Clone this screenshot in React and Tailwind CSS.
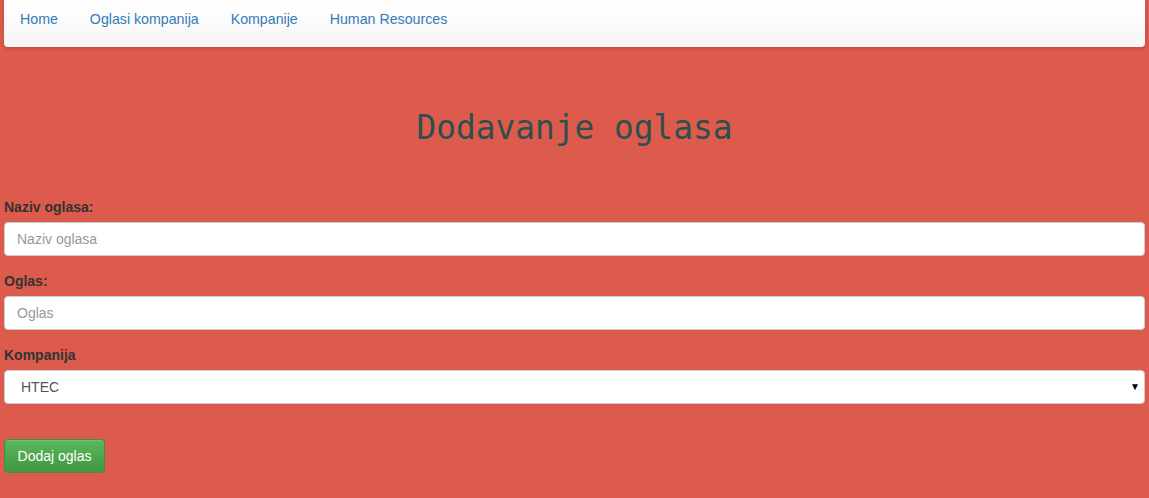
import { useState } from "react";

const links = ["Home", "Oglasi kompanija", "Kompanije", "Human Resources"];

export default function App() {
  const [firma, setFirma] = useState("HTEC");

  return (
    <div className="min-h-[498px] bg-[#dc5b4c] px-[4px] font-['Liberation_Sans',Arial,sans-serif] text-[14px] text-[#333]">
      <nav className="flex h-[47px] items-start rounded-b-[4px] bg-gradient-to-b from-white to-[#f6f6f6] shadow-[0_1px_4px_rgba(0,0,0,0.18)]">
        {links.map((l) => (
          <a
            key={l}
            href="#"
            className="px-[16px] pt-[9px] text-[14.2px] leading-[20px] text-[#337ab7]"
          >
            {l}
          </a>
        ))}
      </nav>

      <h1 className="mt-[59px] mb-[47px] text-center font-['DejaVu_Sans_Mono','Liberation_Mono',monospace] text-[32.8px] leading-[44px] text-[#2f4f4f]">
        Dodavanje oglasa
      </h1>

      <form className="flex flex-col" onSubmit={(e) => e.preventDefault()}>
        <div className="mb-[15px] flex flex-col">
          <label className="mb-[5px] font-bold leading-[20px]">Naziv oglasa:</label>
          <input
            placeholder="Naziv oglasa"
            className="h-[34px] rounded-[4px] border border-[#ccc] bg-white px-[12px] text-[#555] placeholder:text-[#999] outline-none"
          />
        </div>
        <div className="mb-[15px] flex flex-col">
          <label className="mb-[5px] font-bold leading-[20px]">Oglas:</label>
          <input
            placeholder="Oglas"
            className="h-[34px] rounded-[4px] border border-[#ccc] bg-white px-[12px] text-[#555] placeholder:text-[#999] outline-none"
          />
        </div>
        <div className="flex flex-col">
          <label className="mb-[5px] font-bold leading-[20px]">Kompanija</label>
          <div className="relative">
            <select
              value={firma}
              onChange={(e) => setFirma(e.target.value)}
              className="h-[34px] w-full appearance-none rounded-[4px] border border-[#ccc] bg-white pl-[16px] text-[#555] outline-none"
            >
              <option>HTEC</option>
            </select>
            <span className="pointer-events-none absolute right-[5px] top-[12px] text-[10px] leading-none text-black">▼</span>
          </div>
        </div>
        <div className="pt-[35px]">
          <button
            type="submit"
            className="h-[34px] w-[101px] rounded-[4px] border border-[#3e8f3e] bg-gradient-to-b from-[#5cb85c] to-[#419641] text-white shadow-[inset_0_1px_0_rgba(255,255,255,0.15)]"
          >
            Dodaj oglas
          </button>
        </div>
      </form>
    </div>
  );
}
